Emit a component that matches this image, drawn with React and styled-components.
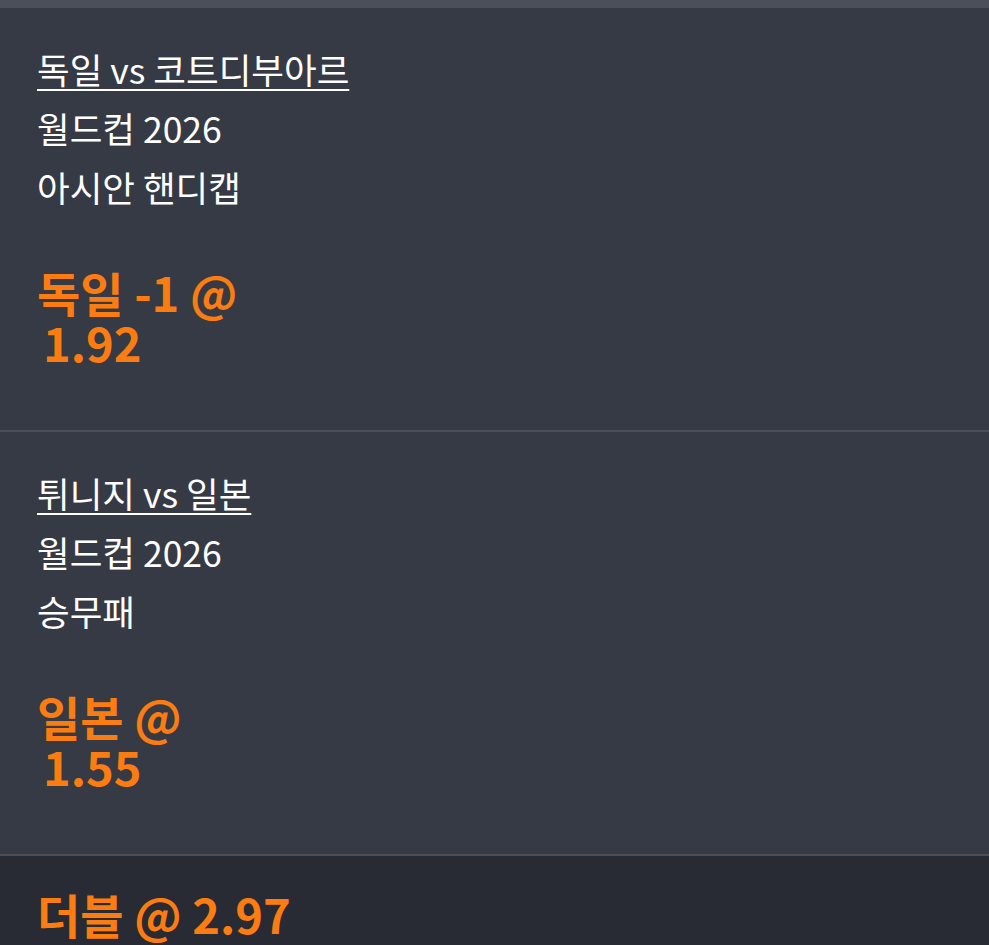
import React from "react";
import styled, { createGlobalStyle } from "styled-components";

const GlobalStyle = createGlobalStyle`
  body {
    margin: 0;
    background: #363a45;
    font-family: "Noto Sans CJK KR", "Noto Sans", sans-serif;
  }
`;

const Slip = styled.div`
  display: flex;
  flex-direction: column;
  min-height: 945px;
  background: #363a45;
  border-top: 8px solid #4b4f5a;
`;

const Leg = styled.section`
  display: flex;
  flex-direction: column;
  padding: 31px 37px 63px;
  border-bottom: 2px solid #4a4e59;
  color: #ffffff;
`;

const Line = styled.div`
  font-size: 35.5px;
  line-height: 59px;
  font-weight: 400;
`;

const Match = styled(Line)`
  span {
    text-decoration: underline;
    text-decoration-thickness: 2px;
    text-underline-offset: 5px;
  }
`;

const Pick = styled.div`
  margin-top: 51px;
  color: #fb7d12;
  font-size: 47px;
  font-weight: 700;
  line-height: 50px;
`;

const Odds = styled.span`
  display: block;
  padding-left: 6px;
`;

const Footer = styled.div`
  flex: 1;
  background: #292b34;
  padding: 30px 37px;
  color: #fb7d12;
  font-size: 47px;
  font-weight: 700;
  line-height: 56px;
`;

const legs = [
  { match: "독일 vs 코트디부아르", league: "월드컵 2026", market: "아시안 핸디캡", pick: "독일 -1 @", odds: "1.92" },
  { match: "튀니지 vs 일본", league: "월드컵 2026", market: "승무패", pick: "일본 @", odds: "1.55" },
];

export default function App() {
  return (
    <>
      <GlobalStyle />
      <Slip>
        {legs.map((leg) => (
          <Leg key={leg.match}>
            <Match>
              <span>{leg.match}</span>
            </Match>
            <Line>{leg.league}</Line>
            <Line>{leg.market}</Line>
            <Pick>
              {leg.pick}
              <Odds>{leg.odds}</Odds>
            </Pick>
          </Leg>
        ))}
        <Footer>더블 @ 2.97</Footer>
      </Slip>
    </>
  );
}
